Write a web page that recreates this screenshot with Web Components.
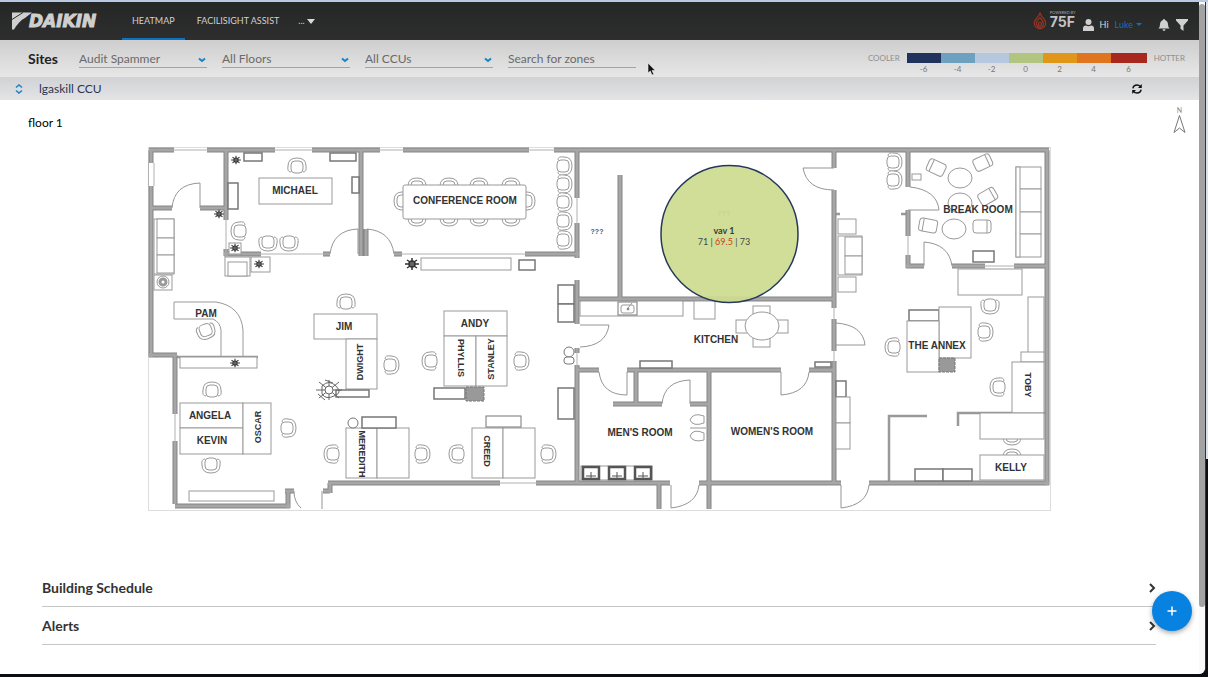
<!DOCTYPE html>
<html lang="en">
<head>
<meta charset="utf-8">
<title>Heatmap</title>
<style>
html, body { margin: 0; }
body { font-family: Lato, "Liberation Sans", sans-serif; color: #222; background: #0c0d10; }
</style>
</head>
<body>
<heatmap-app></heatmap-app>
<script>
function define(name, html, setup) {
  const template = document.createElement('template');
  template.innerHTML = html;
  customElements.define(name, class extends HTMLElement {
    connectedCallback() {
      if (this.shadowRoot) return;
      const root = this.attachShadow({ mode: 'open' });
      root.append(template.content.cloneNode(true));
      if (setup) setup(this, root);
    }
  });
}

/* ---------- navigation ---------- */
define('brand-logo', `
<style>
:host { display: flex; align-items: center; width: 90px; flex: none; color: #cfcfcf; }
svg { width: 20px; height: 20px; flex: none; }
b { font: italic 700 17px/20px "DejaVu Sans", sans-serif; margin-left: -3px; -webkit-text-stroke: 1px #cfcfcf; }
</style>
<svg viewBox="0 0 20 20" aria-hidden="true"><path d="M0 1.500H20L13 7Q7 10 2 18.500H0Z" fill="#cfcfcf"/><path d="M0 8.500L11 1.500" stroke="#2a2a2a" stroke-width="1"/></svg><b>DAIKIN</b>`);

define('nav-tab', `
<style>
:host { display: flex; }
a { display: flex; align-items: center; gap: 2px; padding: 2px 10px 0; color: #d0d0d0; text-decoration: none; font-size: 9px; line-height: 12px; border-bottom: 2px solid transparent; }
:host([active]) a { border-color: #0b74bd; }
</style>
<a href="#"><slot></slot></a>`);

define('powered-by', `
<style>
:host { display: flex; gap: 3px; align-items: flex-start; }
svg { width: 14px; height: 18px; margin-top: 2px; }
span { display: block; font-size: 4px; line-height: 5px; color: #aaa; }
b { display: block; font: 700 14px/13px Inter, sans-serif; color: #c4c4c4; }
</style>
<svg viewBox="0 0 14 18" fill="none" stroke="#8d3325" stroke-width="1.300" aria-hidden="true"><path d="M7 1Q6 4 3 7Q0 11 2.500 14.500Q7 19 11.500 14.500Q14 11 11 7Q8 4 7 1Z"/><path d="M7 5.500Q3 9.500 3.500 12Q5 15.500 7 15.500Q10 15 10.500 12Q10 9 7 5.500Z"/><circle cx="7" cy="12" r="1.600"/></svg>
<div><span>POWERED BY</span><b>75F</b></div>`);

define('top-nav', `
<style>
:host { display: flex; height: 38px; background: linear-gradient(#252626, #2e2e2e); padding: 0 11px 0 12px; }
nav { display: flex; margin-left: 20px; gap: 2px; flex: 1; }
.user { display: flex; align-items: center; font-size: 9px; line-height: 12px; color: #d8d8d8; }
powered-by { align-self: flex-start; margin: 8px 7px 0 0; }
.who { display: flex; align-items: center; gap: 6px; margin: 7px 16px 0 0; }
.who a { color: #0b74bd; text-decoration: none; display: flex; align-items: center; gap: 3px; }
button { border: 0; background: none; padding: 0; display: flex; margin-top: 7px; }
.bell { margin-right: 6px; }
svg { display: block; }
.more { margin-left: -3px; }
</style>
<brand-logo></brand-logo>
<nav aria-label="Main">
<nav-tab active>HEATMAP</nav-tab><nav-tab>FACILISIGHT ASSIST</nav-tab><nav-tab class="more">...<svg width="8" height="5" viewBox="0 0 8 5" aria-hidden="true"><path d="M0 0H8L4 5Z" fill="#d8d8d8"/></svg></nav-tab>
</nav>
<div class="user">
<powered-by></powered-by>
<div class="who"><svg width="11" height="12" viewBox="0 0 11 12" fill="#cfcfcf" aria-hidden="true"><circle cx="5.500" cy="3" r="3"/><path d="M0 12V9.500Q0 6.500 3 6.500Q5.500 8 8 6.500Q11 6.500 11 9.500V12Z"/></svg><span>Hi</span><a href="#">Luke<svg width="6" height="3" viewBox="0 0 6 3" aria-hidden="true"><path d="M0 0H6L3 3Z" fill="#0b74bd"/></svg></a></div>
<button class="bell" aria-label="Notifications"><svg width="12" height="12" viewBox="0 0 12 12" fill="#d0d0d0"><path d="M6 0Q7 0 7 1Q10 2 10 5.500Q10 8 11.500 9.500H.5Q2 8 2 5.500Q2 2 5 1Q5 0 6 0ZM4.500 10.300H7.500Q7.300 12 6 12Q4.700 12 4.500 10.300Z"/></svg></button>
<button aria-label="Filter"><svg width="12" height="12" viewBox="0 0 12 12" fill="#d0d0d0"><path d="M0 0H12V1.500L7.500 6.500V12L4.500 9.800V6.500L0 1.500Z"/></svg></button>
</div>`);

/* ---------- filters ---------- */
define('site-select', `
<style>
:host { display: block; width: 128px; }
label { display: flex; align-items: center; border-bottom: 1px solid #a4a4a4; position: relative; }
select { appearance: none; border: 0; background: none; font: 12px/16px Lato, sans-serif; color: #6a6a6a; width: 100%; height: 16px; padding: 0; margin: 0; outline: 0; }
svg { position: absolute; right: 1px; top: 6px; pointer-events: none; }
</style>
<label><select><option></option></select><svg width="8" height="6" viewBox="0 0 8 6" aria-hidden="true"><path d="M1 1.500L4 4L7 1.500" fill="none" stroke="#1583c6" stroke-width="2"/></svg></label>`,
(el, root) => {
  root.querySelector('select').setAttribute('aria-label', el.getAttribute('label'));
  root.querySelector('option').textContent = el.getAttribute('value');
});

define('heat-scale', `
<style>
:host { display: flex; gap: 7px; font-size: 8px; line-height: 10px; color: #8f8f8f; }
ol { list-style: none; margin: 0; padding: 0; display: grid; grid-template-columns: repeat(6, 34px) 36px; width: 240px; }
li { text-align: center; color: #777; font-size: 8px; line-height: 12px; }
i { display: block; height: 10px; }
</style>
<span>COOLER</span><ol></ol><span>HOTTER</span>`,
(el, root) => {
  const steps = [['-6', '#21325c'], ['-4', '#6ea1bf'], ['-2', '#b5c8df'], ['0', '#b1c581'], ['2', '#e09618'], ['4', '#e0751f'], ['6', '#a8281d']];
  root.querySelector('ol').innerHTML = steps.map(([t, c]) => `<li><i style="background:${c}"></i>${t}</li>`).join('');
});

define('filter-bar', `
<style>
:host { display: flex; height: 37px; background: linear-gradient(#cecece, #e7e7e7); padding: 0 14px 0 28px; box-sizing: border-box; }
h1 { font-size: 14px; line-height: 18px; margin: 10px 0 0; width: 51px; color: #222; }
form { display: flex; gap: 15px; margin-top: 11px; flex: 1; align-items: flex-start; }
input { width: 128px; height: 17px; box-sizing: border-box; border: 0; border-bottom: 1px solid #a4a4a4; border-radius: 0; background: none; padding: 0 0 2px; font: 12px/14px Lato, sans-serif; color: #666; outline: 0; }
input::placeholder { color: #6a6a6a; opacity: 1; }
heat-scale { margin-top: 13px; }
</style>
<h1>Sites</h1>
<form>
<site-select label="Site" value="Audit Spammer"></site-select>
<site-select label="Floor" value="All Floors"></site-select>
<site-select label="CCU" value="All CCUs"></site-select>
<input aria-label="Search for zones" placeholder="Search for zones">
</form>
<heat-scale></heat-scale>`);

define('ccu-bar', `
<style>
:host { display: flex; align-items: center; height: 23px; background: linear-gradient(#d1d2d5, #e4e4e7); padding: 0 57px 0 15px; }
h2 { flex: 1; font-weight: 400; font-size: 12px; line-height: 16px; margin: 0; color: #2a3550; }
button { border: 0; padding: 0; background: none; display: flex; }
.sort { margin-right: 16px; }
</style>
<button class="sort" aria-label="Switch CCU"><svg width="8" height="10" viewBox="0 0 8 10" fill="none" stroke="#1c86c9" stroke-width="1.600"><path d="M1 3.500L4 1L7 3.500M1 6.500L4 9L7 6.500"/></svg></button>
<h2><slot></slot></h2>
<button aria-label="Refresh"><svg width="10" height="10" viewBox="0 0 10 10" fill="none" stroke="#111" stroke-width="1.500"><path d="M.9 4.300Q1.500 1 5 1Q7 1 8.500 2.500M9.100 5.700Q8.500 9 5 9Q3 9 1.500 7.500"/><path d="M9.800 0V4H6ZM.2 10V6H4Z" fill="#111" stroke="none"/></svg></button>`);

/* ---------- floor plan ---------- */
define('floor-plan', `
<style>
:host { display: block; }
svg { display: block; width: 100%; height: auto; }
.name { font: 700 10px "Liberation Sans", Arial, sans-serif; fill: #333; text-anchor: middle; }
.side { font-size: 9px; }
.note { font-size: 7px; fill: #555; }
.zone { font: 9px Lato, sans-serif; fill: #3c4a4a; text-anchor: middle; }
.title { font-weight: 700; fill: #333d3d; }
</style>
<svg viewBox="148 147 903 364" role="img" aria-label="floor 1 plan">
<defs>
<g id="chair"><path d="M-6 6Q-10 6 -9 0Q-9 -8 0 -8Q9 -8 9 0Q10 6 6 6"/><rect x="-6" y="-5" width="12" height="12" rx="4"/></g>
<g id="plant" fill="#666" stroke="#333" stroke-width="1.500"><circle r="3"/><path d="M-7 0H-3M7 0H3M0 -6V-3M0 6V3M-5 -4L-2 -2M5 -4L2 -2M-5 4L-2 2M5 4L2 2"/></g>
<g id="sink" stroke="#555"><rect x="-8" y="-6" width="16" height="12" stroke-width="2.500"/><path d="M-5 3H5M0 -1V5"/></g>
<path id="walls" d="M149 150H174M207 150H275M312 150H380M403 150H529M554 150H1049M151 150V163M151 186V357M149 355H177M175 355V414M175 441V504M175 506H290M288 508V491M285 491H294M323 491H330M330 493V483M328 483H500M536 483H670M699 483H841M869 483H1049M1047 150V485M152 208H172M200 208H226M226 150V220M226 249V256M224 254H261M323 254H330M361 150V256M366 229V256M394 254H402M525 254H579M577 150V198M577 223V258M577 280V324M577 348V353M577 365V483M620 175V298M579 299H833M578 370H599M627 370H781M809 370H834M834 150V168M834 190V308M834 319V351M834 361V483M636 370V404M613 404H662M690 404H709M709 370V509M659 483V509M908 150V187M908 210V236M908 255V268M906 266H924M952 266H985M1014 266H1047"/>
</defs>
<rect x="148" y="147" width="903" height="364" fill="#fff"/>
<rect x="148.500" y="147.500" width="902" height="363" fill="none" stroke="#ddd"/>
<g id="lines" fill="none" stroke="#959595" stroke-width="1">
<path stroke="#b0b0b0" d="M174 150H207M275 150H312M380 150H403M529 150H554M148.500 163V186M154 163V186M175 414V441M226 220V250M261 254H323M402 254H525M577 198V223M577 353V365M500 483H536M834 308V319M834 351V361M908 236V255M985 266H1014"/>
<path d="M172 208Q174 184 200 183V208M330 254Q333 230 358 229V254M367 229Q391 231 394 254M803 168H834M803 168Q807 190 834 190M662 404Q664 381 690 380V404M599 372Q602 395 627 395V372M781 372V395Q807 393 809 372M671 485V508Q697 505 699 485M841 485V508Q867 505 869 485M580 325H609Q606 346 580 347M836 323Q863 325 865 345H836M910 187Q937 190 939 210H908M924 266V242Q949 244 952 266M294 491Q294 502 301 508M322 491V509"/>
<path stroke-width="2.500" stroke="#999" d="M889 483V416H927M958 426V413H1046M836 214H840M901 214H906M177 357H258"/>
</g>
<use href="#walls" fill="none" stroke="#858585" stroke-width="5"/>
<use href="#walls" fill="none" stroke="#a6a6a6" stroke-width="3"/>
<g id="furniture" fill="#fff" stroke="#999" stroke-width="1"></g>
<g id="names"></g>
<circle cx="729.500" cy="234" r="68.500" fill="#cddb90" fill-opacity=".93" stroke="#26385a" stroke-width="1.500"/>
<text class="zone title" x="724" y="234">vav 1</text>
<text class="zone" x="724" y="245">71 | <tspan fill="#cf3a1e">69.5</tspan> | 73</text>
</svg>`,
(el, root) => {
  const rect = (x, y, w, h, extra = '') => `<rect x="${x}" y="${y}" width="${w}" height="${h}" ${extra}/>`;
  const use = id => ([x, y, r = 0]) => `<use href="#${id}" transform="translate(${x} ${y}) rotate(${r})"/>`;
  const dark = 'stroke="#777" stroke-width="1.500"';
  const chairs = [[297, 166], [239, 231, -90], [268, 243, 180], [289, 243, 180], [206, 331, 160], [346, 302], [391, 365, 90], [430, 361, -90], [521, 361, 90],
    [212, 390], [211, 465, 180], [288, 428, 90], [332, 454, -90], [422, 454, 90], [457, 454, -90], [548, 454, 90],
    [417, 186], [449, 186], [479, 186], [511, 186], [417, 218, 180], [449, 218, 180], [479, 218, 180], [511, 218, 180], [402, 201, -90], [527, 201, 90],
    [564, 166, 90], [564, 184, 90], [564, 202, 90], [564, 221, 90], [564, 240, 90], [894, 162, 90], [894, 180, 90],
    [990, 306, 180], [985, 332, 90], [893, 347, -90], [998, 387, -90], [1012, 437, 180], [1012, 457]];
  const seats = [[936, 168, 25], [983, 163, -25], [988, 197, -30], [928, 226, 10], [982, 227, 0]];
  let s = chairs.map(use('chair')).join('');
  s += seats.map(([x, y, r]) => `<g transform="translate(${x} ${y}) rotate(${r})"><rect x="-9" y="-7" width="18" height="13" rx="3"/><path d="M${x > 970 ? '5' : '-5'} -7V6"/></g>`).join('');
  s += [[259, 178, 73, 26], [403, 185, 123, 34, 'rx="2"'],
    [314, 314, 63, 25], [346, 339, 31, 50], [444, 311, 63, 25], [444, 336, 32, 50], [476, 336, 31, 50],
    [180, 403, 63, 25], [180, 428, 63, 26], [243, 403, 28, 51], [346, 428, 31, 50], [377, 428, 32, 50], [472, 428, 31, 50], [503, 428, 32, 50],
    [189, 491, 85, 10], [180, 357, 77, 11], [421, 258, 90, 12], [519, 260, 16, 10, dark], [434, 388, 31, 11, dark], [362, 417, 34, 11, dark],
    [486, 416, 35, 11, 'stroke="#777"'], [336, 390, 33, 7, dark], [558, 285, 16, 19, dark], [558, 304, 16, 18, dark], [558, 388, 16, 31, dark],
    [228, 183, 10, 26, dark], [244, 153, 18, 8, dark], [330, 153, 26, 8, dark], [352, 177, 7, 16, dark],
    [154, 219, 20, 55], [157, 219, 17, 19], [157, 238, 17, 17], [157, 255, 17, 18], [154, 275, 18, 15],
    [225, 257, 25, 19], [228, 262, 19, 14], [251, 257, 19, 15], [229, 243, 12, 11],
    [580, 301, 103, 15], [618, 302, 19, 13, 'stroke="#777"'], [694, 301, 21, 18], [640, 361, 32, 7, dark], [815, 362, 16, 5, dark],
    [753, 306, 17, 11], [753, 335, 17, 12], [736, 320, 12, 13], [776, 320, 12, 13],
    [581, 466, 71, 14],
    [838, 219, 18, 15], [838, 236, 24, 39], [845, 237, 17, 19], [845, 256, 17, 18], [838, 277, 18, 15],
    [836, 381, 10, 16, dark], [836, 397, 14, 26], [836, 423, 14, 26],
    [1016, 167, 25, 22], [1016, 189, 25, 23], [1016, 212, 25, 22], [1016, 234, 25, 23], [1016, 167, 4, 90], [973, 251, 21, 11, dark], [958, 269, 64, 26],
    [912, 174, 9, 6], [909, 310, 30, 11, dark], [939, 307, 32, 51], [907, 321, 32, 51],
    [1028, 297, 16, 56], [1021, 352, 23, 10], [1012, 362, 32, 51], [980, 413, 64, 26], [980, 455, 64, 25], [915, 469, 28, 12, dark], [943, 469, 29, 12, dark]
  ].map(r => rect(...r)).join('');
  s += rect(466, 387, 18, 14, 'fill="#999" stroke="#777" stroke-dasharray="3 1"') + rect(939, 358, 16, 14, 'fill="#999" stroke="#777" stroke-dasharray="3 1"');
  s += '<path fill="none" d="M243 356V330Q241 306 216 302H174V319H213Q220 322 221 330V356"/>';
  s += '<circle cx="163" cy="282" r="6"/><circle cx="163" cy="282" r="3" stroke-width="3"/><circle cx="353" cy="423" r="5" stroke="#777"/><circle cx="569" cy="352" r="5" stroke="#777"/><rect x="564" y="357" width="10" height="7" rx="3" stroke="#777"/>';
  s += '<ellipse cx="960" cy="178" rx="12" ry="10"/><ellipse cx="960" cy="203" rx="12" ry="10"/><ellipse cx="954" cy="229" rx="12" ry="10"/><ellipse cx="762" cy="326" rx="17" ry="14"/>';
  s += '<path d="M704 416Q693 412 690 420Q693 427 704 423ZM704 433Q693 428 690 436Q693 443 704 440ZM690 428H706"/><rect x="621" y="305" width="13" height="8" rx="2"/><circle cx="628" cy="309" r="1" fill="#333"/><path d="M628 308L632 303"/>';
  s += [[591, 473], [617, 473], [643, 473]].map(use('sink')).join('');
  s += [[236, 160], [219, 214], [235, 248], [259, 264], [412, 264], [235, 363]].map(([x, y]) => `<use href="#plant" transform="translate(${x} ${y}) scale(${x === 412 ? 1 : 0.7})"/>`).join('');
  s += '<g stroke="#666"><path fill="none" d="M316 390H342M329 380V400M319 382L339 398M339 382L319 398M322 386Q329 379 336 386T334 396Q326 400 322 394ZM325 380L333 383M318 394L325 400"/><circle cx="329" cy="390" r="4"/></g>';
  root.querySelector('#furniture').innerHTML = s;

  const names = [['MICHAEL', 295, 190], ['CONFERENCE ROOM', 465, 200], ['PAM', 206, 313], ['JIM', 344, 326], ['ANDY', 475, 323], ['ANGELA', 210, 415], ['KEVIN', 212, 440],
    ['KITCHEN', 716, 339], ["MEN'S ROOM", 640, 432], ["WOMEN'S ROOM", 772, 431], ['BREAK ROOM', 978, 209], ['THE ANNEX', 937, 345], ['KELLY', 1011, 467],
    ['DWIGHT', 360, 362, -90], ['STANLEY', 491, 359, -90], ['OSCAR', 258, 427, -90], ['PHYLLIS', 461, 358, 90], ['MEREDITH', 362, 454, 90], ['CREED', 487, 451, 90], ['TOBY', 1028, 385, 90]];
  root.querySelector('#names').innerHTML = names.map(([t, x, y, r]) =>
    `<text class="name${r ? ' side' : ''}" transform="translate(${x} ${y}) rotate(${r || 0})" y="${r ? 3 : 4}">${t}</text>`).join('') +
    '<text class="name note" x="597" y="234">???</text><text class="name note" x="724" y="216">???</text>';
});

define('floor-view', `
<style>
:host { display: block; }
header { display: flex; justify-content: space-between; height: 47px; padding: 0 13px 0 28px; box-sizing: border-box; }
h3 { font-weight: 400; font-size: 12px; line-height: 16px; margin: 15px 0 0; color: #000; }
.north { display: grid; justify-items: center; align-content: start; margin-top: 7px; font-size: 7px; line-height: 7px; color: #888; }
.plan { padding: 0 148px; }
</style>
<header><h3><slot></slot></h3><div class="north"><span>N</span><svg width="13" height="20" viewBox="0 0 13 20" fill="none" stroke="#777" aria-hidden="true"><path d="M6.500 1.500L12 18.500L6.500 14L1 18.500Z"/></svg></div></header>
<div class="plan"><floor-plan></floor-plan></div>`);

/* ---------- lower panels ---------- */
define('panel-row', `
<style>
:host { display: block; border-bottom: 1px solid #c6c6c6; }
button { display: flex; align-items: center; justify-content: space-between; width: 100%; height: 37px; border: 0; padding: 0; background: none; color: #333; font: 700 14px/18px Lato, sans-serif; }
</style>
<button aria-expanded="false"><slot></slot><svg width="8" height="10" viewBox="0 0 8 10" fill="none" stroke="#333" stroke-width="2" aria-hidden="true"><path d="M2 1L6 5L2 9"/></svg></button>`);

define('add-button', `
<style>
:host { display: block; position: absolute; right: 7px; bottom: 43px; }
button { width: 40px; height: 40px; border: 0; border-radius: 50%; background: #0782e0; padding: 0; display: grid; place-items: center; box-shadow: 0 2px 5px rgba(0,0,0,.35); }
</style>
<button aria-label="Add"><svg width="10" height="10" viewBox="0 0 10 10" stroke="#fff" stroke-width="1.500"><path d="M5 .5V9.500M.5 5H9.500"/></svg></button>`);

define('heatmap-app', `
<style>
:host { display: flex; min-height: 100vh; box-sizing: border-box; border-top: 2px solid #b9c9e4; border-bottom: 3px solid #0c0d10; background: linear-gradient(#dde1e8 68%, #0c0d10 68%); padding-right: 2px; }
.window { flex: 1; display: flex; background: #fff; border-right: 1px solid #333; border-bottom-right-radius: 7px; }
main { flex: 1; min-width: 0; position: relative; }
.panels { margin: 58px 43px 0 42px; }
.bar { width: 6px; padding-top: 2px; background: #fafafa; border-bottom-right-radius: 7px; }
.bar i { display: block; height: 90%; background: #a3a3a3; border-radius: 3px; }
.cursor { position: absolute; left: 647px; top: 60px; }
</style>
<div class="window">
<main>
<top-nav></top-nav>
<filter-bar></filter-bar>
<ccu-bar>lgaskill CCU</ccu-bar>
<floor-view>floor 1</floor-view>
<div class="panels"><panel-row>Building Schedule</panel-row><panel-row>Alerts</panel-row></div>
<add-button></add-button>
<svg class="cursor" width="9" height="14" viewBox="0 0 9 14" aria-hidden="true"><path d="M1 1V11L3.300 9L5 13L6.800 12.200L5 8.500H8.200Z" fill="#111" stroke="#eee" stroke-width=".6"/></svg>
</main>
<div class="bar"><i></i></div>
</div>`);
</script>
</body>
</html>
